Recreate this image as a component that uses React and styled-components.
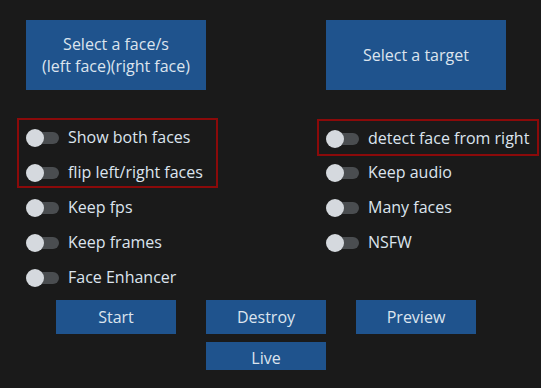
import styled, { createGlobalStyle } from "styled-components";

const GlobalStyle = createGlobalStyle`
  body {
    margin: 0;
    background: #1a1a1a;
    font-family: "Open Sans", "Noto Sans", sans-serif;
  }
`;

const Window = styled.div`
  width: 541px;
  height: 388px;
  background: #1a1a1a;
  color: #dce4ee;
  overflow: hidden;
`;

const TopRow = styled.div`
  display: flex;
  gap: 120px;
  padding: 20px 0 0 26px;
`;

const Button = styled.button`
  display: flex;
  align-items: center;
  justify-content: center;
  box-sizing: border-box;
  width: ${(p) => p.$w || 120}px;
  height: ${(p) => p.$h || 34}px;
  padding: ${(p) => p.$drop || 0}px 0 0;
  border: none;
  background: #1f538d;
  color: #dce4ee;
  font-family: "Open Sans", "Noto Sans", sans-serif;
  font-size: 16px;
  line-height: 22px;
  text-align: center;
  white-space: pre-line;
  grid-column: ${(p) => p.$col || "auto"};
  grid-row: ${(p) => p.$row || "auto"};
`;

const Options = styled.div`
  display: grid;
  grid-template-columns: 300px 1fr;
  align-items: start;
  margin-top: 28px;
  padding-left: 17px;
`;

const Column = styled.div`
  display: flex;
  flex-direction: column;
  padding-top: ${(p) => p.$offset || 0}px;
`;

const Group = styled.div`
  box-sizing: border-box;
  width: ${(p) => p.$w}px;
  height: ${(p) => p.$h}px;
  border: 2px solid #8b0a0a;
  margin-bottom: ${(p) => p.$after || 0}px;
`;

const Row = styled.div`
  display: flex;
  align-items: center;
  gap: 9px;
  height: 35px;
  padding-left: ${(p) => (p.$boxed ? 7 : 9)}px;
  font-size: 16px;
  line-height: 20px;
  white-space: nowrap;
`;

const Label = styled.span`
  margin-top: -2px;
`;

const Switch = styled.span`
  position: relative;
  flex: none;
  width: 33px;
  height: 18px;

  &::before {
    content: "";
    position: absolute;
    left: 4px;
    right: 0;
    top: 3px;
    height: 12px;
    border-radius: 6px;
    background: #4a4d50;
  }

  &::after {
    content: "";
    position: absolute;
    left: 0;
    top: 0;
    width: 18px;
    height: 18px;
    border-radius: 50%;
    background: #d5d9de;
  }
`;

const Actions = styled.div`
  display: grid;
  grid-template-columns: repeat(3, 120px);
  grid-template-rows: 34px 28px;
  column-gap: 30px;
  row-gap: 8px;
  margin-top: 5px;
  padding-left: 56px;
`;

function Toggle({ label, boxed }) {
  return (
    <Row $boxed={boxed}>
      <Switch />
      <Label>{label}</Label>
    </Row>
  );
}

export default function App() {
  return (
    <>
      <GlobalStyle />
      <Window>
        <TopRow>
          <Button $w={180} $h={70}>
            {"Select a face/s\n(left face)(right face)"}
          </Button>
          <Button $w={180} $h={70}>
            Select a target
          </Button>
        </TopRow>

        <Options>
          <Column>
            <Group $w={201} $h={70} $after={2}>
              <Toggle boxed label="Show both faces" />
              <Toggle boxed label="flip left/right faces" />
            </Group>
            <Toggle label="Keep fps" />
            <Toggle label="Keep frames" />
            <Toggle label="Face Enhancer" />
          </Column>
          <Column $offset={1}>
            <Group $w={222} $h={37} $after={-1}>
              <Toggle boxed label="detect face from right" />
            </Group>
            <Toggle label="Keep audio" />
            <Toggle label="Many faces" />
            <Toggle label="NSFW" />
          </Column>
        </Options>

        <Actions>
          <Button $col={1} $row={1}>Start</Button>
          <Button $col={2} $row={1}>Destroy</Button>
          <Button $col={3} $row={1}>Preview</Button>
          <Button $col={2} $row={2} $h={28} $drop={4}>Live</Button>
        </Actions>
      </Window>
    </>
  );
}
